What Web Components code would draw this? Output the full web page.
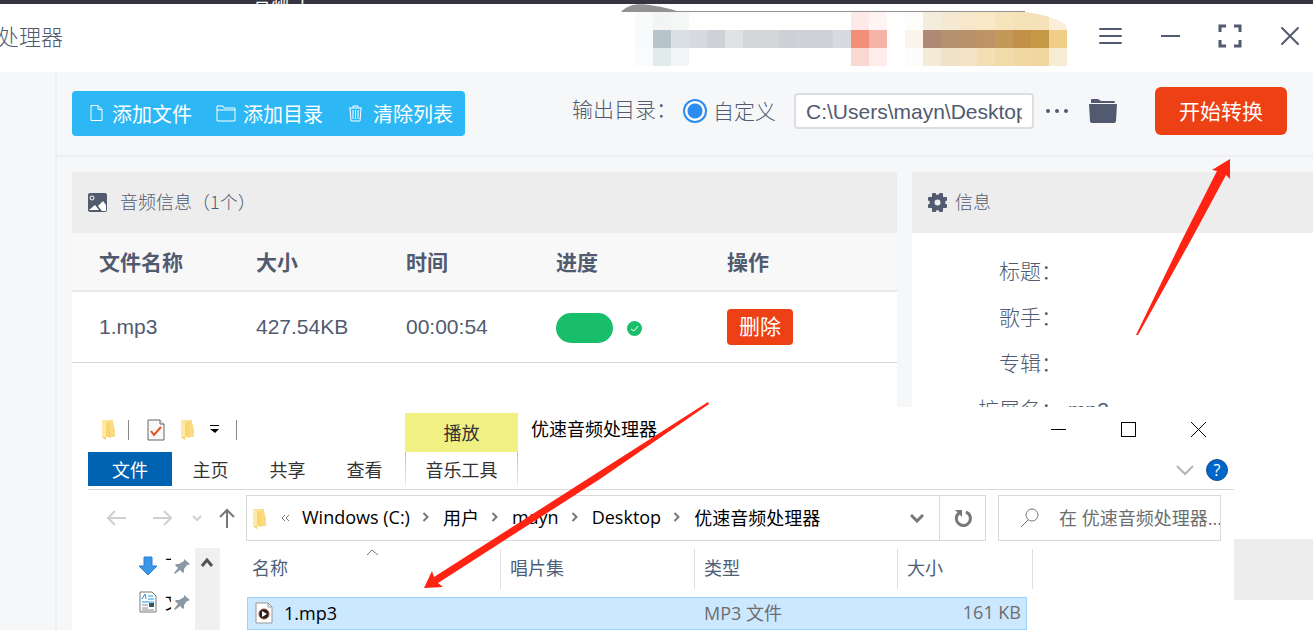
<!DOCTYPE html>
<html lang="zh-CN">
<head>
<meta charset="utf-8">
<title>优速音频处理器</title>
<style>
html, body { margin: 0; height: 100%; }
body { overflow: hidden; background: #fff; font-family: "Liberation Sans", "Noto Sans CJK SC", sans-serif; color: #515a6e; }
</style>
</head>
<body>
<desktop-page></desktop-page>
<script>
const base = `*{box-sizing:border-box} svg{display:block;flex:none} button{font:inherit;color:inherit;background:none;border:0;padding:0;margin:0;cursor:pointer}`;
function define(name, css, html) {
  const tpl = document.createElement('template');
  tpl.innerHTML = `<style>${base}${css}</style>${html}`;
  customElements.define(name, class extends HTMLElement {
    constructor() {
      super();
      this.attachShadow({ mode: 'open' }).append(tpl.content.cloneNode(true));
    }
  });
}

/* Yellow Windows folder */
const folder = `<svg width="15" height="21" viewBox="0 0 15 21"><path d="M1 1h9v18l-9-2z" fill="#fbe29a"/><path d="M1 1l4 2v18l-4-3z" fill="#ffe9a6"/><path d="M5 3h7l2 9v6H5z" fill="#f7d673"/><path d="M9 1h3v11h2v6h-4z" fill="#fbdc82"/><path d="M1 18l4 3v-3z" fill="#f3cf6e"/></svg>`;
const pin = `<svg width="17" height="17" viewBox="0 0 17 17"><path d="M10 1l6 5-2 1-1 0-3 4 0 3-1 1-3-3-5 4-1-1 4-5-3-3 1-1 3 0 5-3z" fill="#8a99a3"/></svg>`;

define('desktop-strip',
  `:host{display:block;height:4px;overflow:hidden;background:#343541;color:#fff}
   span{display:block;margin-top:-10px;padding-left:253px;font-size:18px;line-height:24px}`,
  `<span>音频 上</span>`);

/* Pixelated account area: 18px cells in three bands */
const top3 = ['#f9fbfb','#f3f4f4','#f5f6f6','','','','','','','','','','#fde9e7','#fef4f3','','#fefdfb','#f4ecdc','#f5e9d1','#f7e8c9','#f8e8c6','#f6e4bd','#f5e2b8','#f5e1b8','#fbefda'];
const mid3 = ['#f8fbfb','#b8c4cb','#dae0e4','#d9dadf','#d0d1d6','#e1e2e6','#d5d6da','#d5d6da','#cdd0d5','#d1d2d7','#d1d2d7','#d8dae0','#f38f78','#f6b4a6','','#fcf4ea','#ad8976','#b59170','#b9926b','#be9365','#c49858','#c19148','#c69949','#f0ce87'];
const low3 = ['#f9fcfc','#e2ebeb','#f2f6f6','','','','','','','','','','#f9d8d2','#fdecea','','#fefcf8','#f4ebd9','#efe2c8','#f4e4c5','#f4dfb5','#f2dbab','#f1d8a3','#f1d69d','#f8ecd6'];
const band = (row, y) => row.map((c, i) => c ? `<rect x="${18 + i * 18}" y="${y}" width="18" height="18" fill="${c}"/>` : '').join('');

define('app-titlebar',
  `:host{display:flex;align-items:center;justify-content:space-between;height:68px;padding-right:12px;background:#fff}
   h1{margin:0 0 0 -3px;font-size:22px;line-height:32px;font-weight:300;white-space:nowrap}
   .right{display:flex;align-items:flex-start;height:68px}
   nav{display:flex;gap:38px;padding-top:21px;margin-left:30px}
   nav button{width:22px;height:22px} nav svg{margin:-1px}`,
  `<h1>处理器</h1>
   <div class="right">
   <svg width="452" height="68" viewBox="0 0 452 68" shape-rendering="crispEdges" aria-hidden="true">
     <g shape-rendering="auto"><path d="M4 8C14-2 26-2 60 7H408V8Z" fill="#929295"/></g>
     <clipPath id="r"><path d="M0 8H408C430 11 449 17 450 24V62H0Z"/></clipPath>
     <g clip-path="url(#r)">${band(top3, 8)}${band(mid3, 26)}${band(low3, 44)}</g>
   </svg>
   <nav aria-label="窗口">
     <button aria-label="菜单"><svg width="24" height="24" viewBox="0 0 24 24" stroke="#515a6e" stroke-width="2" stroke-linecap="round"><path d="M2 5h21M2 12h21M2 19h21"/></svg></button>
     <button aria-label="最小化"><svg width="24" height="24" viewBox="0 0 24 24" stroke="#515a6e" stroke-width="2"><path d="M3 12h19"/></svg></button>
     <button aria-label="最大化"><svg width="24" height="24" viewBox="0 0 24 24" stroke="#515a6e" stroke-width="3" fill="none"><path d="M2 8V2h6M16 2h6v6M22 16v6h-6M8 22H2v-6"/></svg></button>
     <button aria-label="关闭"><svg width="24" height="24" viewBox="0 0 24 24" stroke="#515a6e" stroke-width="2" stroke-linecap="round"><path d="M4 4l16 16M20 4L4 20"/></svg></button>
   </nav></div>`);

define('app-toolbar',
  `:host{display:flex;align-items:center;height:85px;padding:15px 26px 20px 15px;border-bottom:2px solid #eceef1;font-size:21px;font-weight:300}
   .files{display:flex;height:45px;margin-top:4px;padding:0 12px 0 17px;gap:24px;background:#2db7f5;border-radius:4px;color:#fff;font-size:20px;font-weight:400}
   .files button{display:flex;align-items:center;gap:7px;white-space:nowrap}
   .out{display:flex;align-items:center;margin-left:auto;white-space:nowrap}
   .out > span{padding-bottom:6px}
   .out label{display:flex;align-items:center;gap:6px;margin-left:6px}
   label span{padding-bottom:3px}
   input[type=radio]{appearance:none;width:24px;height:24px;margin:0;border:2px solid #2d8cf0;border-radius:50%;background:radial-gradient(circle,#2d8cf0 7px,#fff 8px)}
   input[type=text]{width:240px;height:36px;margin:0 12px 0 18px;padding:2px 10px 0;border:2px solid #dcdee2;border-radius:4px;background:#fff;font:21px "Liberation Sans",sans-serif;color:#515a6e}
   .open{margin:0 38px 0 21px}
   .go{width:132px;height:48px;padding-bottom:3px;border-radius:6px;background:#ed4014;color:#fff;font-weight:400}`,
  `<div class="files">
    <button><svg width="16" height="18" viewBox="0 0 16 18" fill="none" stroke="#fff" stroke-width="1"><path d="M2 1.500h7l4 4v11H2zM9 1.500v4h4"/></svg>添加文件</button>
    <button><svg width="20" height="18" viewBox="0 0 20 18" fill="none" stroke="#fff" stroke-width="1"><path d="M1 17V2h6l1 2h11v13zM1 6h18"/></svg>添加目录</button>
    <button><svg width="19" height="18" viewBox="0 0 19 18" fill="none" stroke="#fff" stroke-width="1"><path d="M2 4h13M3 4l1 13h9l1-13M6 4V2h5v2M6 6v9M8.500 6v9M11 6v9"/></svg>清除列表</button>
   </div>
   <div class="out"><span>输出目录：</span>
    <label><input type="radio" name="dir" checked><span>自定义</span></label>
    <input type="text" aria-label="输出目录" value="C:\\Users\\mayn\\Desktop">
    <button aria-label="更多"><svg width="22" height="6" viewBox="0 0 22 6" fill="#515a6e"><circle cx="2" cy="3" r="2"/><circle cx="11" cy="3" r="2"/><circle cx="20" cy="3" r="2"/></svg></button>
    <button class="open" aria-label="打开目录"><svg width="28" height="26" viewBox="0 0 28 26" fill="#515a6e"><path d="M2 4V2q0-1 1-1h6l3 2h13q1 0 1 2H2z"/><path d="M0 6h28l-1 17q0 2-2 2H3q-2 0-2-2z"/></svg></button>
   </div>
   <button class="go">开始转换</button>`);

define('panel-card',
  `:host{display:block;background:#fff;min-width:0}
   header{display:flex;align-items:center;height:61px;padding-left:15px;background:#ededed}
   h2{display:flex;align-items:center;gap:var(--gap,12px);margin:0;padding-bottom:4px;font:300 18px/26px "Noto Sans CJK SC",sans-serif;white-space:nowrap}
   ::slotted(svg){margin-top:4px}`,
  `<header><h2><slot name="icon"></slot><slot name="title"></slot></h2></header><slot></slot>`);

define('audio-table',
  `:host{display:block}
   table{width:100%;border-collapse:separate;border-spacing:0;table-layout:fixed;font-size:21px;line-height:30px}
   th,td{padding:0 0 0 27px;text-align:left;white-space:nowrap}
   th{height:59px;padding-top:3px;background:#f8f8f9;border-bottom:2px solid #e6e8eb;font-weight:700}
   td{height:71px;border-bottom:1px solid #d5d8db}
   .p{display:flex;align-items:center;gap:14px;padding-top:2px}
   .bar{width:57px;height:30px;border-radius:15px;background:#19be6b}
   button{display:block;width:66px;height:36px;border-radius:4px;background:#ed4014;color:#fff}`,
  `<table><colgroup><col style="width:157px"><col style="width:150px"><col style="width:150px"><col style="width:171px"><col></colgroup>
   <thead><tr><th>文件名称</th><th>大小</th><th>时间</th><th>进度</th><th>操作</th></tr></thead>
   <tbody><tr><td>1.mp3</td><td>427.54KB</td><td>00:00:54</td>
   <td><div class="p"><div class="bar" role="progressbar" aria-label="进度" aria-valuenow="100"></div><svg width="15" height="15" viewBox="0 0 15 15"><circle cx="7.500" cy="7.500" r="7.500" fill="#19be6b"/><path d="M4 8l3 2 4-5" fill="none" stroke="#fff"/></svg></div></td>
   <td><button>删除</button></td></tr></tbody></table>`);

define('info-list',
  `:host{display:block;min-height:306px;padding-top:16px;font-size:21px;font-weight:300}
   dl{display:grid;grid-template-columns:150px 1fr;grid-auto-rows:46px;column-gap:6px;margin:0;line-height:46px}
   dt{text-align:right} dd{margin:0;font-weight:400}`,
  `<dl><dt>标题：</dt><dd></dd><dt>歌手：</dt><dd></dd><dt>专辑：</dt><dd></dd><dt>扩展名：</dt><dd>mp3</dd></dl>`);

define('explorer-titlebar',
  `:host{display:flex;height:45px;color:#000}
   .quick{display:flex;align-items:center;width:317px;padding-left:13px}
   i{width:1px;height:20px;background:#888}
   .tab{width:113px;height:39px;margin-top:6px;background:#f0f083;color:#333;text-align:center;line-height:41px}
   .name{margin:0 auto 0 13px;line-height:45px;white-space:nowrap}
   nav{display:flex;align-items:center;gap:53px;padding-right:27px}`,
  `<div class="quick">${folder}<i style="margin:0 18px 0 12px"></i>
    <svg width="18" height="22" viewBox="0 0 18 22"><path d="M1 1h12l4 4v16H1z" fill="#f8f8f8" stroke="#666"/><path d="M13 1v4h4" fill="#fff" stroke="#666"/><path d="M4 12l3 4 7-8" fill="none" stroke="#df5420" stroke-width="2"/></svg>
    <span style="margin:0 14px 0 15px">${folder}</span>
    <svg width="11" height="9" viewBox="0 0 11 9"><path d="M1 0h9v1H1zM1 4h9l-4 4z"/></svg><i style="margin-left:16px"></i></div>
   <div class="tab">播放</div><span class="name">优速音频处理器</span>
   <nav aria-label="资源管理器窗口"><button aria-label="最小化"><svg width="17" height="17" viewBox="0 0 17 17" shape-rendering="crispEdges"><path d="M1 8h15v1H1z"/></svg></button>
   <button aria-label="最大化"><svg width="17" height="17" viewBox="0 0 17 17" shape-rendering="crispEdges"><rect x="1.500" y="1.500" width="14" height="14" fill="none" stroke="#000"/></svg></button>
   <button aria-label="关闭"><svg width="17" height="17" viewBox="0 0 17 17"><path d="M1 1l15 15M16 1L1 16" stroke="#000"/></svg></button></nav>`);

define('explorer-ribbon',
  `:host{display:flex;align-items:flex-start;height:38px;border-bottom:1px solid #d8d9da;color:#333}
   button{width:77px;height:34px;line-height:36px}
   .file{width:84px;background:#0063b1;color:#fff}
   .music{width:113px;margin-left:2px;border:1px solid;border-width:0 1px;border-image:linear-gradient(#bbb,#eee) 1}
   .help{display:flex;align-items:center;gap:12px;height:36px;margin-left:auto;padding-right:6px}
   b{width:22px;height:22px;border-radius:11px;background:#0066cc;border:1px solid #15508c;color:#fff;font-size:16px;line-height:20px;text-align:center;font-weight:400}`,
  `<button class="file">文件</button><button>主页</button><button>共享</button><button>查看</button><button class="music">音乐工具</button>
   <div class="help"><svg width="18" height="12" viewBox="0 0 18 12"><path d="M1 2l8 8 8-8" fill="none" stroke="#b4b4b4" stroke-width="2"/></svg><b>?</b></div>`);

const sep = `<svg width="8" height="12" viewBox="0 0 8 12"><path d="M1 2l4 4-4 4" fill="none" stroke="#777" stroke-width="2"/></svg>`;
define('explorer-address',
  `:host{display:flex;height:46px;margin-top:5px;padding-right:13px;color:#000}
   .nav{display:flex;align-items:center;width:158px;padding-left:18px}
   .path{display:flex;align-items:center;flex:1;min-width:0;border:1px solid #d9d9d9;padding-left:5px;white-space:nowrap}
   .crumbs{display:flex;align-items:center;gap:12px;flex:1;min-width:0;padding-bottom:2px}
   .crumbs svg{width:9px}
   .refresh{display:flex;align-items:center;justify-content:center;width:46px;height:44px;border-left:1px solid #d9d9d9}
   .search{display:flex;align-items:center;gap:19px;width:223px;margin-left:12px;padding-left:21px;border:1px solid #d9d9d9}
   input{flex:1;min-width:0;border:0;padding:0;background:none;font:inherit}
   input::placeholder{color:#6d6d6d;opacity:1}`,
  `<div class="nav">
    <svg width="20" height="16" viewBox="0 0 20 16" fill="none" stroke="#cfcfcf" stroke-width="2"><path d="M20 8H2M9 1L2 8l7 7"/></svg>
    <svg width="20" height="16" viewBox="0 0 20 16" style="margin:0 19px 0 27px" fill="none" stroke="#cfcfcf" stroke-width="2"><path d="M0 8h18M11 1l7 7-7 7"/></svg>
    <svg width="10" height="7" viewBox="0 0 10 7" fill="none" stroke="#cfcfcf" stroke-width="2"><path d="M1 1l4 4 4-4"/></svg>
    <svg width="16" height="20" viewBox="0 0 16 20" style="margin-left:17px" fill="none" stroke="#777" stroke-width="2"><path d="M8 20V2M1 9l7-7 7 7"/></svg></div>
   <div class="path">${folder}<svg width="10" height="8" viewBox="0 0 10 8" style="margin:0 11px 0 14px" fill="none" stroke="#777"><path d="M4 1L1 4l3 3M8 1L5 4l3 3"/></svg>
    <div class="crumbs"><span>Windows (C:)</span>${sep}<span>用户</span>${sep}<span>mayn</span>${sep}<span>Desktop</span>${sep}<span>优速音频处理器</span></div>
    <svg width="14" height="10" viewBox="0 0 14 10" style="margin-right:15px"><path d="M1 2l6 6 6-6" fill="none" stroke="#777" stroke-width="3"/></svg>
    <button class="refresh" aria-label="刷新"><svg width="18" height="18" viewBox="0 0 18 18"><path d="M12 3a7 7 0 1 1-7 1" fill="none" stroke="#777" stroke-width="3"/><path d="M1 1h7v7z" fill="#777"/></svg></button></div>
   <label class="search"><svg width="20" height="20" viewBox="0 0 20 20" fill="none" stroke="#777"><circle cx="12" cy="7" r="6"/><path d="M8 12l-7 7"/></svg><input type="text" aria-label="搜索" placeholder="在 优速音频处理器..."></label>`);

define('explorer-sidebar',
  `:host{display:flex;width:132px;padding-top:7px;color:#000}
   ul{flex:1;margin:0;padding:0 0 0 50px;list-style:none}
   li{display:flex;align-items:center;height:36px}
   span{width:6px;height:26px;margin:0 3px 0 7px;overflow:hidden;white-space:nowrap;line-height:26px}
   .bar{width:25px;background:#f0f0f0;padding:10px 6px}`,
  `<ul><li><svg width="20" height="20" viewBox="0 0 20 20"><path d="M6 1h8v9h5l-9 9-9-9h5z" fill="#3a96e8" stroke="#2c7fd0"/></svg><span>下载</span>${pin}</li>
   <li><svg width="20" height="22" viewBox="0 0 20 22"><path d="M2 1h12l4 4v16H2z" fill="#fff" stroke="#777"/><path d="M4 8l3-5 1 5M10 5h5M10 8h6M4 11h12" stroke="#2492e0" stroke-width="1" fill="none"/><path d="M4 14h6M4 17h6M4 19h12" stroke="#888"/><path d="M11 12h5v4h-5z" fill="#356"/></svg><span>文档</span>${pin}</li></ul>
   <div class="bar"><svg width="13" height="9" viewBox="0 0 13 9"><path d="M1 8l5-6 5 6" fill="none" stroke="#555" stroke-width="3"/></svg></div>`);

define('explorer-files',
  `:host{display:block;position:relative;flex:1;min-width:0;margin-left:27px}
   table{width:786px;border-collapse:separate;border-spacing:0;table-layout:fixed}
   th,td{padding:0;text-align:left;font-weight:inherit;white-space:nowrap}
   thead tr{height:56px} th{color:#4c607a}
   th div{height:40px;padding-left:9px;border-right:1px solid #dedede;line-height:38px}
   th:first-child div{padding-left:5px}
   td{height:33px;background:#cce8ff;border:1px solid #99d1ff;border-width:1px 0;color:#6d6d6d;padding:0 0 2px 9px;line-height:26px}
   td:first-child{border-left-width:1px;padding-left:7px;color:#000}
   td:last-child{padding:0 6px;text-align:right;background:none;border:0}
   .cell{display:flex;align-items:center;gap:11px}
   .end{height:33px;margin:0 0 0 -6px;padding-right:5px;background:#cce8ff;border:1px solid #99d1ff;border-left:0;line-height:29px}
   .sort{position:absolute;left:119px;top:7px}`,
  `<svg class="sort" width="13" height="8" viewBox="0 0 13 8"><path d="M1 7l5-5 6 5" fill="none" stroke="#777"/></svg>
   <table><colgroup><col style="width:254px"><col style="width:194px"><col style="width:203px"><col></colgroup>
   <thead><tr><th><div>名称</div></th><th><div>唱片集</div></th><th><div>类型</div></th><th><div>大小</div></th></tr></thead>
   <tbody><tr><td><div class="cell"><svg width="18" height="22" viewBox="0 0 18 22"><path d="M1 1h12l4 4v16H1z" fill="#fff" stroke="#999"/><path d="M13 1v4h4" fill="none" stroke="#999"/><circle cx="9" cy="12" r="5" fill="#222"/><circle cx="9" cy="12" r="5" fill="none" stroke="#a34a28" /><path d="M7 9l5 3-5 3z" fill="#fff"/></svg>1.mp3</div></td><td></td><td>MP3 文件</td><td><div class="end">161 KB</div></td></tr></tbody></table>`);

define('explorer-window',
  `:host{display:flex;flex-direction:column;background:#fff;padding-left:16px;font-family:"Open Sans","Noto Sans CJK SC",sans-serif;font-size:18px;font-weight:400;overflow:hidden}
   .body{display:flex;flex:1;min-height:0}`,
  `<explorer-titlebar></explorer-titlebar><explorer-ribbon></explorer-ribbon><explorer-address></explorer-address>
   <div class="body"><explorer-sidebar></explorer-sidebar><explorer-files></explorer-files></div>`);

define('desktop-page',
  `:host{display:flex;flex-direction:column;position:relative;height:100%;overflow:hidden}
   .app{display:flex;flex:1;min-height:0;background:#f5f7f9}
   aside{width:57px;border-right:2px solid #eceef1;flex:none}
   main{display:flex;flex-direction:column;flex:1;min-width:0}
   .panels{display:grid;grid-template-columns:825fr 401fr;gap:15px;flex:1;min-height:0;padding:15px 0 0 15px}
   .info{background:#fff;min-width:0}
   explorer-window{position:absolute;left:72px;right:79px;top:407px;bottom:0}
   .arrows{position:absolute;left:0;top:0;pointer-events:none}`,
  `<desktop-strip></desktop-strip><app-titlebar></app-titlebar>
   <div class="app"><aside></aside><main><app-toolbar></app-toolbar>
    <div class="panels">
     <panel-card><svg slot="icon" width="21" height="21" viewBox="0 0 21 21"><rect x="1" y="1" width="19" height="19" rx="2" fill="#515a6e"/><circle cx="5" cy="6" r="2" fill="none" stroke="#fff"/><path d="M2 18l6-5 4 5zM11 14l5-5 3 4v6h-4z" fill="#fff"/></svg><span slot="title">音频信息（1个）</span><audio-table></audio-table></panel-card>
     <div class="info"><panel-card style="--gap:7px"><svg slot="icon" width="21" height="21" viewBox="0 0 21 21"><g fill="#515a6e"><circle cx="10.500" cy="10.500" r="8"/><rect x="5" y="1" width="4" height="19" rx="1"/><rect x="12" y="1" width="4" height="19" rx="1"/><rect x="1" y="5" width="19" height="4" rx="1"/><rect x="1" y="12" width="19" height="4" rx="1"/></g><circle cx="10.500" cy="10.500" r="3" fill="#ededed"/></svg><span slot="title">信息</span><info-list></info-list></panel-card><panel-card></panel-card></div>
    </div></main></div>
   <explorer-window></explorer-window>
   <svg class="arrows" width="1313" height="630" viewBox="0 0 1313 630" fill="#fe2312" aria-hidden="true"><path d="M1136 335L1182 240L1217 171L1212 170L1230 159V179L1226 175L1191 240L1138 335Z"/><path d="M708 402L600 471L434 577L432 571L424 588L443 587L438 583L600 479L709 404Z"/></svg>`);
</script>
</body>
</html>
